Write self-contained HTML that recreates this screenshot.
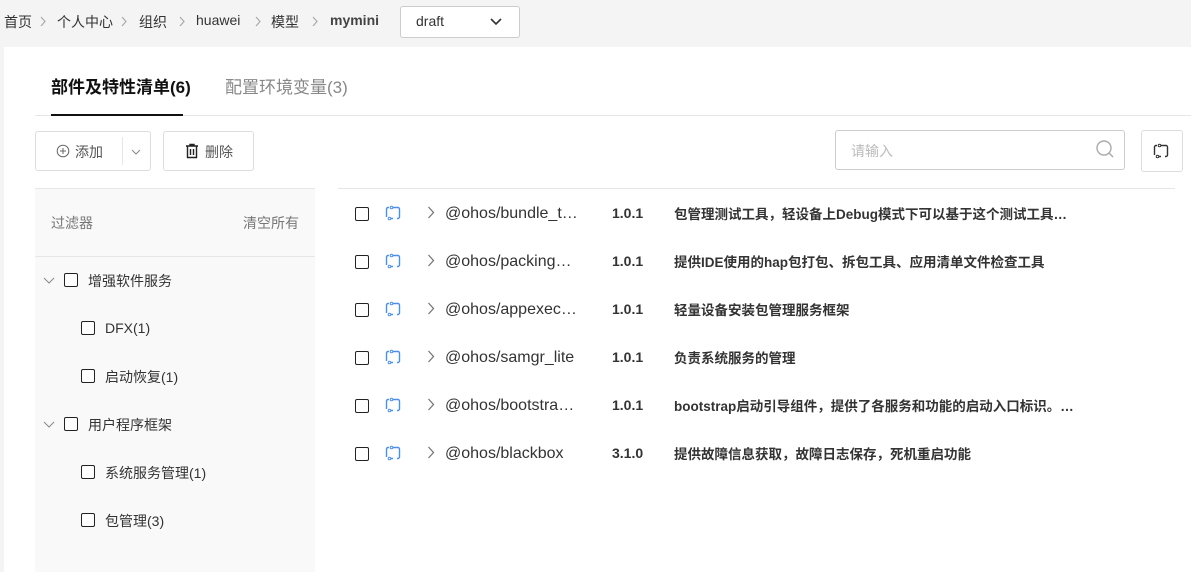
<!DOCTYPE html><html><head><meta charset="utf-8"><style>
*{margin:0;padding:0;box-sizing:border-box}
body{width:1191px;height:572px;overflow:hidden;background:#f4f4f4;font-family:"Liberation Sans","Noto Sans CJK SC",sans-serif;color:#333;position:relative}
.a{position:absolute;white-space:nowrap}
.bc{top:12px;font-size:14px;color:#333}
.panel{position:absolute;left:4px;top:47px;right:0;bottom:0;background:#fff}
.cb{position:absolute;width:14px;height:14px;border:1.5px solid #222;border-radius:2px;background:#fff}
.side{position:absolute;left:35px;top:188px;width:280px;bottom:0;background:#f9f9f9;border-top:1px solid #e6e6e6}
</style></head><body>
<div class="a bc" style="left:4px">首页</div>
<div class="a bc" style="left:57px">个人中心</div>
<div class="a bc" style="left:139px">组织</div>
<div class="a bc" style="left:196px">huawei</div>
<div class="a bc" style="left:271px">模型</div>
<div class="a bc" style="left:330px;font-weight:bold;color:#444">mymini</div>
<svg class="a" style="left:0;top:0" width="330" height="40"><g stroke="#aaa" stroke-width="1.2" fill="none"><path d="M41 17l4 4.5-4 4.5"/><path d="M122 17l4 4.5-4 4.5"/><path d="M180 17l4 4.5-4 4.5"/><path d="M256 17l4 4.5-4 4.5"/><path d="M313 17l4 4.5-4 4.5"/></g></svg>
<div class="a" style="left:400px;top:6px;width:120px;height:32px;background:#fff;border:1px solid #ccc;border-radius:3px"></div>
<div class="a" style="left:416px;top:13px;font-size:14px">draft</div>
<svg class="a" style="left:490px;top:18px" width="12" height="8"><path d="M1 1l5 5 5-5" stroke="#333" stroke-width="1.6" fill="none"/></svg>
<div class="panel"></div>
<div class="a" style="left:51px;top:73px;font-size:17px;font-weight:bold;color:#111">部件及特性清单(6)</div>
<div class="a" style="left:225px;top:73px;font-size:17px;color:#888">配置环境变量(3)</div>
<div class="a" style="left:35px;top:115px;width:1156px;height:1px;background:#e6e6e6"></div>
<div class="a" style="left:51px;top:114px;width:132px;height:2px;background:#111"></div>
<div class="a" style="left:35px;top:131px;width:116px;height:40px;border:1px solid #ddd;border-radius:3px;background:#fff"></div>
<div class="a" style="left:122px;top:137px;width:1px;height:28px;background:#e6e6e6"></div>
<svg class="a" style="left:56px;top:144px" width="14" height="14"><circle cx="7" cy="7" r="5.8" stroke="#666" fill="none"/><path d="M7 4v6M4 7h6" stroke="#666"/></svg>
<div class="a" style="left:75px;top:142px;font-size:14px;color:#555">添加</div>
<svg class="a" style="left:130px;top:148px" width="12" height="8"><path d="M2 2l4 4 4-4" stroke="#888" fill="none"/></svg>
<div class="a" style="left:163px;top:131px;width:91px;height:40px;border:1px solid #ddd;border-radius:3px;background:#fff"></div>
<svg class="a" style="left:184px;top:143px" width="16" height="16"><path d="M2 3h12M6 3V1.5h4V3M3.5 3.5v11h9v-11M6.5 6v6M9.5 6v6" stroke="#222" stroke-width="1.4" fill="none"/></svg>
<div class="a" style="left:205px;top:142px;font-size:14px;color:#555">删除</div>
<div class="a" style="left:835px;top:130px;width:290px;height:40px;border:1px solid #ccc;border-radius:3px;background:#fff"></div>
<div class="a" style="left:851px;top:141px;font-size:14px;color:#bbb">请输入</div>
<svg class="a" style="left:1095px;top:139px" width="20" height="20"><circle cx="9" cy="9" r="7" stroke="#aaa" stroke-width="1.4" fill="none"/><path d="M14 14l4 4" stroke="#aaa" stroke-width="1.4"/></svg>
<div class="a" style="left:1141px;top:130px;width:42px;height:42px;border:1px solid #ddd;border-radius:3px;background:#fff"></div>
<svg class="a" style="left:1153px;top:143px" width="16" height="16"><path d="M4 2.5H3a1.5 1.5 0 0 0-1.5 1.5v8M12 13.5h1a1.5 1.5 0 0 0 1.5-1.5V4a1.5 1.5 0 0 0-1.5-1.5H8M8 13.5H4" stroke="#333" stroke-width="1.4" fill="none"/><circle cx="6.5" cy="2.5" r="1.3" stroke="#333" fill="#fff"/><circle cx="4.5" cy="13.5" r="1.3" stroke="#333" fill="#fff"/></svg>
<div class="a" style="left:338px;top:188px;width:837px;height:1px;background:#e6e6e6"></div>
<div class="side"></div>
<div class="a" style="left:51px;top:213px;font-size:14px;color:#777">过滤器</div>
<div class="a" style="left:243px;top:213px;font-size:14px;color:#777">清空所有</div>
<div class="a" style="left:35px;top:256px;width:280px;height:1px;background:#e6e6e6"></div>
<svg class="a" style="left:43px;top:277px" width="12" height="8"><path d="M1 1l5 5 5-5" stroke="#888" fill="none"/></svg>
<div class="cb" style="left:64px;top:273px"></div><div class="a" style="left:88px;top:271px;font-size:14px">增强软件服务</div>
<div class="cb" style="left:81px;top:321px"></div><div class="a" style="left:105px;top:320px;font-size:14px">DFX(1)</div>
<div class="cb" style="left:81px;top:369px"></div><div class="a" style="left:105px;top:367px;font-size:14px">启动恢复(1)</div>
<svg class="a" style="left:43px;top:421px" width="12" height="8"><path d="M1 1l5 5 5-5" stroke="#888" fill="none"/></svg>
<div class="cb" style="left:64px;top:417px"></div><div class="a" style="left:88px;top:415px;font-size:14px">用户程序框架</div>
<div class="cb" style="left:81px;top:465px"></div><div class="a" style="left:105px;top:463px;font-size:14px">系统服务管理(1)</div>
<div class="cb" style="left:81px;top:513px"></div><div class="a" style="left:105px;top:511px;font-size:14px">包管理(3)</div>
<div id="rows"></div>
<script>
var d=[["@ohos/bundle_t…","1.0.1","包管理测试工具，轻设备上Debug模式下可以基于这个测试工具…"],["@ohos/packing…","1.0.1","提供IDE使用的hap包打包、拆包工具、应用清单文件检查工具"],["@ohos/appexec…","1.0.1","轻量设备安装包管理服务框架"],["@ohos/samgr_lite","1.0.1","负责系统服务的管理"],["@ohos/bootstra…","1.0.1","bootstrap启动引导组件，提供了各服务和功能的启动入口标识。…"],["@ohos/blackbox","3.1.0","提供故障信息获取，故障日志保存，死机重启功能"]];
var h="";d.forEach(function(r,i){var y=213+48*i;
h+='<div class="cb" style="left:355px;top:'+(y-6)+'px"></div>';
h+='<svg class="a" style="left:385px;top:'+(y-8)+'px" width="16" height="16"><path d="M4 2.5H3a1.5 1.5 0 0 0-1.5 1.5v8M12 13.5h1a1.5 1.5 0 0 0 1.5-1.5V4a1.5 1.5 0 0 0-1.5-1.5H8M8 13.5H4" stroke="#4a90ee" stroke-width="1.4" fill="none"/><circle cx="6.5" cy="2.5" r="1.3" stroke="#4a90ee" fill="#fff"/><circle cx="4.5" cy="13.5" r="1.3" stroke="#4a90ee" fill="#fff"/></svg>';
h+='<svg class="a" style="left:427px;top:'+(y-7)+'px" width="8" height="13"><path d="M1.5 1l5 5.5-5 5.5" stroke="#777" stroke-width="1.3" fill="none"/></svg>';
h+='<div class="a" style="left:445px;top:'+(y-8)+'px;font-size:16px;color:#333">'+r[0]+'</div>';
h+='<div class="a" style="left:612px;top:'+(y-8)+'px;font-size:14px;font-weight:bold;color:#333">'+r[1]+'</div>';
h+='<div class="a" style="left:674px;top:'+(y-10)+'px;font-size:13.5px;font-weight:bold;color:#333">'+r[2]+'</div>';});
document.getElementById('rows').innerHTML=h;
</script>
</body></html>
